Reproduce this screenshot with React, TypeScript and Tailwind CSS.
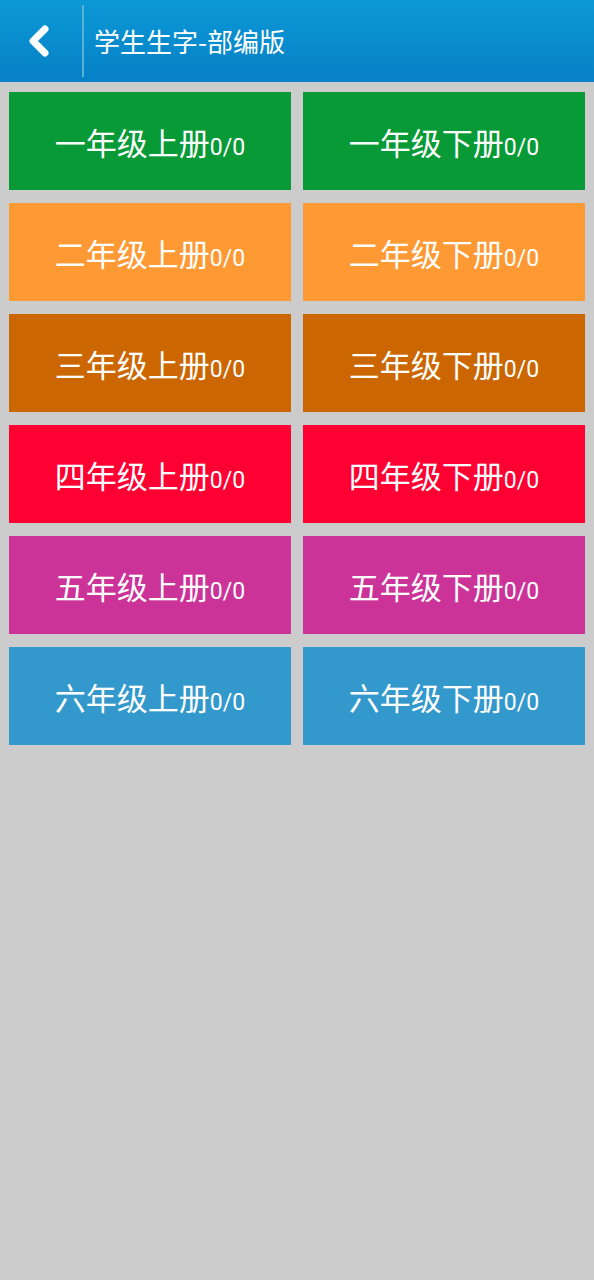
const grades = [
  { name: "一年级", color: "bg-[#079a36]" },
  { name: "二年级", color: "bg-[#ff9933]" },
  { name: "三年级", color: "bg-[#cc6600]" },
  { name: "四年级", color: "bg-[#ff0033]" },
  { name: "五年级", color: "bg-[#cc3399]" },
  { name: "六年级", color: "bg-[#3399cc]" },
];

function BookCard({ label, color }: { label: string; color: string }) {
  return (
    <button
      className={`${color} h-[98px] flex items-center justify-center pt-[7px] text-white font-['Roboto','Noto_Sans_CJK_SC',sans-serif]`}
    >
      <span className="flex items-baseline">
        <span className="text-[31px] leading-none">{label}</span>
        <span className="text-[23px] leading-none">0/0</span>
      </span>
    </button>
  );
}

export default function App() {
  return (
    <div className="min-h-[1280px] w-full bg-[#cccccc] font-['Noto_Sans_CJK_SC',sans-serif]">
      {/* header */}
      <div className="h-[82px] flex items-stretch bg-gradient-to-b from-[#0c99d6] to-[#0780c6]">
        <button className="w-[82px] flex items-center justify-center pr-[4px]">
          <svg width="26" height="32" viewBox="0 0 26 32">
            <path
              d="M19 4 L7 16 L19 28"
              fill="none"
              stroke="white"
              strokeWidth="7"
              strokeLinecap="round"
              strokeLinejoin="round"
            />
          </svg>
        </button>
        <div className="w-[2px] my-[5px] bg-[#56b2d6]" />
        <div className="flex items-center pl-[10px] text-white text-[26px] pb-[1px]">
          学生生字-部编版
        </div>
      </div>

      {/* books */}
      <div className="grid grid-cols-2 gap-x-[12px] gap-y-[13px] px-[9px] pt-[10px]">
        {grades.map((g) => (
          <>
            <BookCard key={g.name + "上"} label={`${g.name}上册`} color={g.color} />
            <BookCard key={g.name + "下"} label={`${g.name}下册`} color={g.color} />
          </>
        ))}
      </div>
    </div>
  );
}
